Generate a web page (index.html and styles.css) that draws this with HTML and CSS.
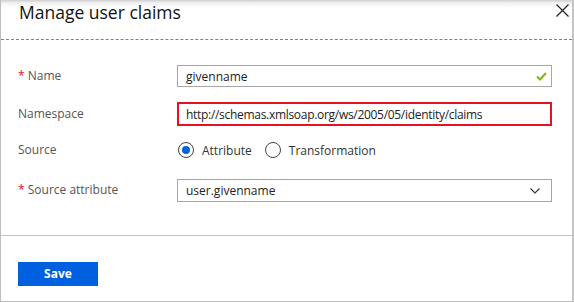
FILE: index.html
```html
<!DOCTYPE html>
<html lang="en">
<head>
    <meta charset="UTF-8">
    <title>Manage user claims</title>
    <link rel="stylesheet" href="styles.css">
</head>
<body>
    <div class="blade">
        <div class="blade-header">
            <h1>Manage user claims</h1>
            <button class="close" type="button" aria-label="Close">
                <svg width="13" height="13" viewBox="0 0 13 13"><path d="M0.5 0.5 L12.5 12.5 M12.5 0.5 L0.5 12.5" stroke="#222" stroke-width="1.2" fill="none"/></svg>
            </button>
        </div>

        <form class="blade-body">
            <div class="row row-name">
                <label class="field-label"><span class="req">*</span> Name</label>
                <div class="input-box">
                    <span class="value">givenname</span>
                    <svg class="check" width="11" height="9" viewBox="0 0 11 9"><path d="M1 4.5 L4 7.5 L10 1" stroke="#7fba00" stroke-width="2" fill="none"/></svg>
                </div>
            </div>

            <div class="row row-ns">
                <label class="field-label">Namespace</label>
                <div class="input-box highlighted">
                    <span class="value url">http://schemas.xmlsoap.org/ws/2005/05/identity/claims</span>
                </div>
            </div>

            <div class="row row-source">
                <label class="field-label">Source</label>
                <div class="radios">
                    <span class="radio checked"></span><span class="radio-text">Attribute</span>
                    <span class="radio"></span><span class="radio-text">Transformation</span>
                </div>
            </div>

            <div class="row row-attr">
                <label class="field-label"><span class="req">*</span> Source attribute</label>
                <div class="input-box">
                    <span class="value">user.givenname</span>
                    <svg class="chevron" width="10" height="6" viewBox="0 0 10 6"><path d="M0.5 0.5 L5 5 L9.5 0.5" stroke="#333" stroke-width="1.1" fill="none"/></svg>
                </div>
            </div>
        </form>

        <div class="blade-footer">
            <button class="save" type="button">Save</button>
        </div>
    </div>
</body>
</html>
```

FILE: styles.css
```css
body {
    margin: 0;
    background: #ffffff;
    font-family: 'Open Sans', 'Noto Sans', sans-serif;
    color: #222;
}
.blade {
    width: 574px;
    height: 302px;
    box-sizing: border-box;
    border-left: 1px solid #bdbdbd;
    border-right: 2px solid #c4c4c4;
    border-bottom: 1px solid #bdbdbd;
    background: linear-gradient(to bottom, #cfcfcf 0px, #f2f2f2 3px, #ffffff 8px);
}
.blade-header {
    height: 39px;
    border-bottom: 1px dashed #1ba1e2;
    display: flex;
    justify-content: space-between;
    align-items: flex-start;
}
h1 {
    margin: 0;
    padding-left: 18px;
    font-size: 17.5px;
    font-weight: 400;
    line-height: 24px;
    color: #111;
}
.close {
    border: none;
    background: none;
    padding: 0;
    margin: 4px 3px 0 0;
    width: 13px;
    height: 13px;
    display: flex;
}
.blade-body {
    padding: 25px 0 33px 0;
}
.row {
    display: flex;
    align-items: center;
}
.row-name { height: 22px; margin-bottom: 15px; }
.row-ns { height: 24px; margin-bottom: 12px; }
.row-source { height: 24px; margin-bottom: 17px; }
.row-attr { height: 23px; }
.field-label {
    width: 159px;
    padding-left: 17px;
    font-size: 12px;
    color: #555;
    margin-top: -2px;
}
.req {
    color: #e81123;
}
.input-box {
    width: 375px;
    height: 100%;
    box-sizing: border-box;
    border: 1px solid #a6a6a6;
    display: flex;
    align-items: center;
    justify-content: space-between;
    padding: 0 12px 0 8px;
    font-size: 12px;
    color: #222;
}
.input-box.highlighted {
    border: 2px solid #e81123;
    padding-left: 7px;
}
.url {
    letter-spacing: -0.3px;
}
.check { margin-right: -8px; }
.chevron { margin-right: -1px; }
.radios {
    display: flex;
    align-items: center;
    font-size: 12px;
    color: #333;
    padding-left: 1px;
}
.radio {
    width: 16px;
    height: 16px;
    box-sizing: border-box;
    border: 1px solid #444;
    border-radius: 50%;
    display: flex;
    align-items: center;
    justify-content: center;
}
.radio.checked::after {
    content: "";
    width: 8px;
    height: 8px;
    border-radius: 50%;
    background: #0063d6;
}
.radio-text {
    margin: 0 13px 0 8px;
}
.blade-footer {
    border-top: 1px solid #c4c4c4;
    padding: 25px 0 0 17px;
}
.save {
    width: 80px;
    height: 24px;
    border: none;
    background: #0060df;
    color: #fff;
    font-family: inherit;
    font-size: 12px;
    font-weight: 700;
    padding: 0;
}
```
